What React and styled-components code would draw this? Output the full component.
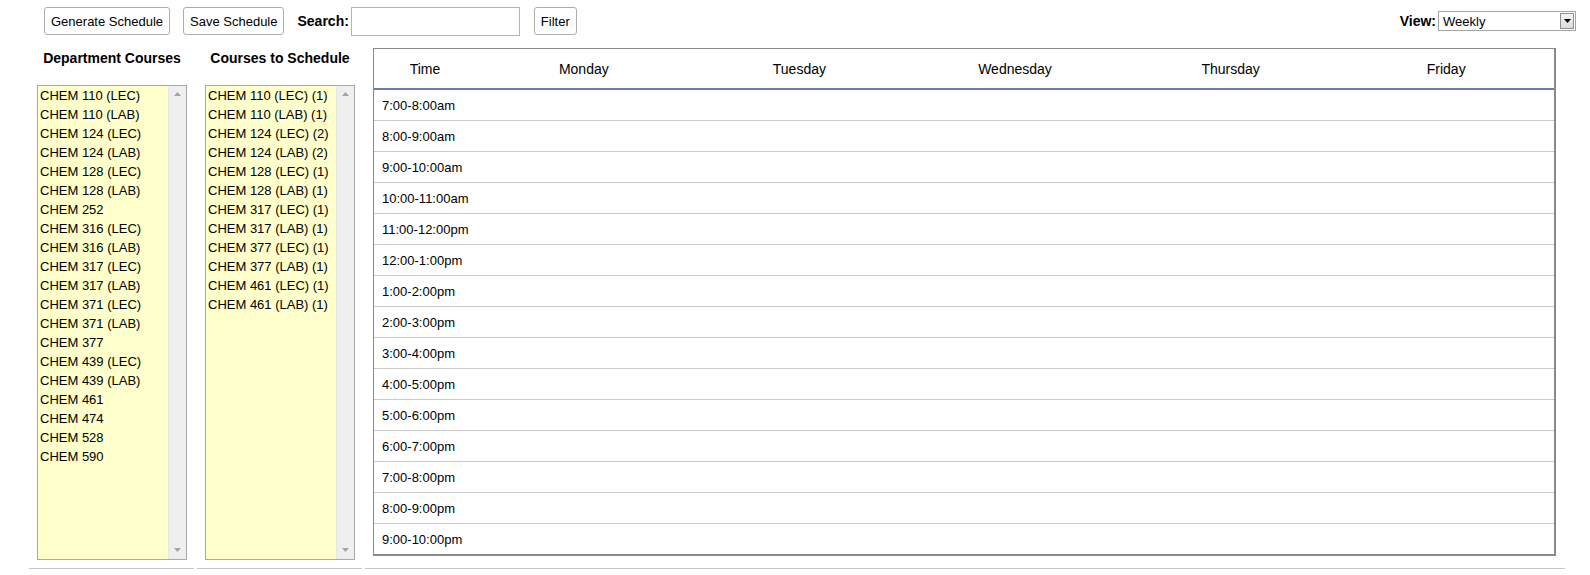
import React from "react";
import styled, { createGlobalStyle } from "styled-components";

const GlobalStyle = createGlobalStyle`
  body {
    margin: 0;
    background: #fff;
    font-family: "Liberation Sans", Arial, sans-serif;
    color: #000;
  }
`;

const departmentCourses = [
  "CHEM 110 (LEC)",
  "CHEM 110 (LAB)",
  "CHEM 124 (LEC)",
  "CHEM 124 (LAB)",
  "CHEM 128 (LEC)",
  "CHEM 128 (LAB)",
  "CHEM 252",
  "CHEM 316 (LEC)",
  "CHEM 316 (LAB)",
  "CHEM 317 (LEC)",
  "CHEM 317 (LAB)",
  "CHEM 371 (LEC)",
  "CHEM 371 (LAB)",
  "CHEM 377",
  "CHEM 439 (LEC)",
  "CHEM 439 (LAB)",
  "CHEM 461",
  "CHEM 474",
  "CHEM 528",
  "CHEM 590",
];

const scheduledCourses = [
  "CHEM 110 (LEC) (1)",
  "CHEM 110 (LAB) (1)",
  "CHEM 124 (LEC) (2)",
  "CHEM 124 (LAB) (2)",
  "CHEM 128 (LEC) (1)",
  "CHEM 128 (LAB) (1)",
  "CHEM 317 (LEC) (1)",
  "CHEM 317 (LAB) (1)",
  "CHEM 377 (LEC) (1)",
  "CHEM 377 (LAB) (1)",
  "CHEM 461 (LEC) (1)",
  "CHEM 461 (LAB) (1)",
];

const days = ["Monday", "Tuesday", "Wednesday", "Thursday", "Friday"];

const timeSlots = [
  "7:00-8:00am",
  "8:00-9:00am",
  "9:00-10:00am",
  "10:00-11:00am",
  "11:00-12:00pm",
  "12:00-1:00pm",
  "1:00-2:00pm",
  "2:00-3:00pm",
  "3:00-4:00pm",
  "4:00-5:00pm",
  "5:00-6:00pm",
  "6:00-7:00pm",
  "7:00-8:00pm",
  "8:00-9:00pm",
  "9:00-10:00pm",
];

function App() {
  return (
    <>
      <GlobalStyle />
      <Toolbar>
        <Button>Generate Schedule</Button>
        <Button>Save Schedule</Button>
        <SearchGroup>
          <Label>Search:</Label>
          <SearchInput type="text" />
        </SearchGroup>
        <Button>Filter</Button>
        <ViewGroup>
          <Label>View:</Label>
          <SelectWrap>
            <ViewSelect defaultValue="weekly">
              <option value="weekly">Weekly</option>
              <option value="daily">Daily</option>
            </ViewSelect>
            <SelectArrow>
              <svg width="7" height="4" viewBox="0 0 7 4">
                <path d="M0 0 L7 0 L3.5 4 Z" fill="#000" />
              </svg>
            </SelectArrow>
          </SelectWrap>
        </ViewGroup>
      </Toolbar>

      <Main>
        <Column>
          <Heading>Department Courses</Heading>
          <CourseList items={departmentCourses} />
        </Column>
        <Column>
          <Heading>Courses to Schedule</Heading>
          <CourseList items={scheduledCourses} />
        </Column>
        <Column $wide>
          <Calendar>
            <HeaderRow>
              <HeaderCell>Time</HeaderCell>
              {days.map((d) => (
                <HeaderCell key={d}>{d}</HeaderCell>
              ))}
            </HeaderRow>
            {timeSlots.map((slot) => (
              <TimeRow key={slot}>
                <TimeCell>{slot}</TimeCell>
                {days.map((d) => (
                  <DayCell key={d} />
                ))}
              </TimeRow>
            ))}
          </Calendar>
        </Column>
      </Main>
    </>
  );
}

function CourseList({ items }) {
  return (
    <ListBox>
      <ListItems>
        {items.map((item) => (
          <ListItem key={item}>{item}</ListItem>
        ))}
      </ListItems>
      <ScrollTrack>
        <svg width="7" height="4" viewBox="0 0 7 4">
          <path d="M0 4 L7 4 L3.5 0 Z" fill="#a3a3a3" />
        </svg>
        <svg width="7" height="4" viewBox="0 0 7 4">
          <path d="M0 0 L7 0 L3.5 4 Z" fill="#a3a3a3" />
        </svg>
      </ScrollTrack>
    </ListBox>
  );
}

export default App;

const Toolbar = styled.div`
  display: flex;
  align-items: center;
  height: 42px;
  padding: 0 14px 0 44px;
`;

const Button = styled.button`
  height: 28px;
  margin-right: 13px;
  padding: 0 6px;
  border: 1px solid #adadad;
  border-radius: 3px;
  background: #fff;
  font-family: "Liberation Sans", Arial, sans-serif;
  font-size: 13px;
  color: #000;
  cursor: pointer;
`;

const SearchGroup = styled.div`
  display: flex;
  align-items: center;
  gap: 2px;
  margin-right: 14px;
`;

const Label = styled.span`
  font-size: 14px;
  font-weight: bold;
`;

const SearchInput = styled.input`
  width: 169px;
  height: 29px;
  box-sizing: border-box;
  border: 1px solid #b4b4b4;
  padding: 0 3px;
  font-family: "Liberation Sans", Arial, sans-serif;
  font-size: 13px;
`;

const ViewGroup = styled.div`
  display: flex;
  align-items: center;
  gap: 2px;
  margin-left: auto;
`;

const SelectWrap = styled.div`
  position: relative;
  width: 138px;
  height: 20px;
`;

const ViewSelect = styled.select`
  appearance: none;
  width: 100%;
  height: 100%;
  box-sizing: border-box;
  border: 1px solid #a5a5a5;
  border-radius: 0;
  padding: 0 0 0 4px;
  background: #fff;
  font-family: "Liberation Sans", Arial, sans-serif;
  font-size: 13px;
  color: #000;
`;

const SelectArrow = styled.div`
  position: absolute;
  top: 2px;
  right: 2px;
  width: 14px;
  height: 16px;
  box-sizing: border-box;
  border: 1px solid #8f8f8f;
  background: linear-gradient(#f4f4f4, #dcdcdc);
  display: flex;
  align-items: center;
  justify-content: center;
  pointer-events: none;
`;

const Main = styled.div`
  display: grid;
  grid-template-columns: 165px 165px 1200px;
  column-gap: 3px;
  margin-left: 29px;
`;

const Column = styled.div`
  display: flex;
  flex-direction: column;
  padding: 6px ${(p) => (p.$wide ? "9px" : "7px")} 8px 8px;
  border-bottom: 1px solid #c6c6c6;
`;

const Heading = styled.div`
  width: 150px;
  height: 20px;
  line-height: 20px;
  margin-bottom: 17px;
  text-align: center;
  font-size: 14px;
  font-weight: bold;
`;

const ListBox = styled.div`
  display: flex;
  width: 150px;
  height: 475px;
  box-sizing: border-box;
  border: 1px solid #a9a9a9;
  background: #ffffcc;
`;

const ListItems = styled.div`
  flex: 1;
  padding: 0 0 0 2px;
`;

const ListItem = styled.div`
  height: 19px;
  line-height: 19px;
  font-size: 13px;
  white-space: nowrap;
`;

const ScrollTrack = styled.div`
  width: 17px;
  background: #efefef;
  border-left: 1px solid #e6e6e6;
  display: flex;
  flex-direction: column;
  justify-content: space-between;
  align-items: center;
  padding: 6px 0 7px;
`;

const Calendar = styled.div`
  width: 1183px;
  box-sizing: border-box;
  border: 1px solid #8a8a8a;
  border-right-width: 2px;
  border-bottom-width: 2px;
`;

const rowColumns = `
  display: grid;
  grid-template-columns: 102px repeat(5, 1fr);
`;

const HeaderRow = styled.div`
  ${rowColumns}
  height: 39px;
  border-bottom: 2px solid #6b7db3;
`;

const HeaderCell = styled.div`
  display: flex;
  align-items: center;
  justify-content: center;
  font-size: 14px;
`;

const TimeRow = styled.div`
  ${rowColumns}
  height: 30px;
  border-bottom: 1px solid #cbcbcb;

  &:last-child {
    border-bottom: none;
  }
`;

const TimeCell = styled.div`
  display: flex;
  align-items: center;
  padding-left: 8px;
  font-size: 13px;
  white-space: nowrap;
`;

const DayCell = styled.div``;
